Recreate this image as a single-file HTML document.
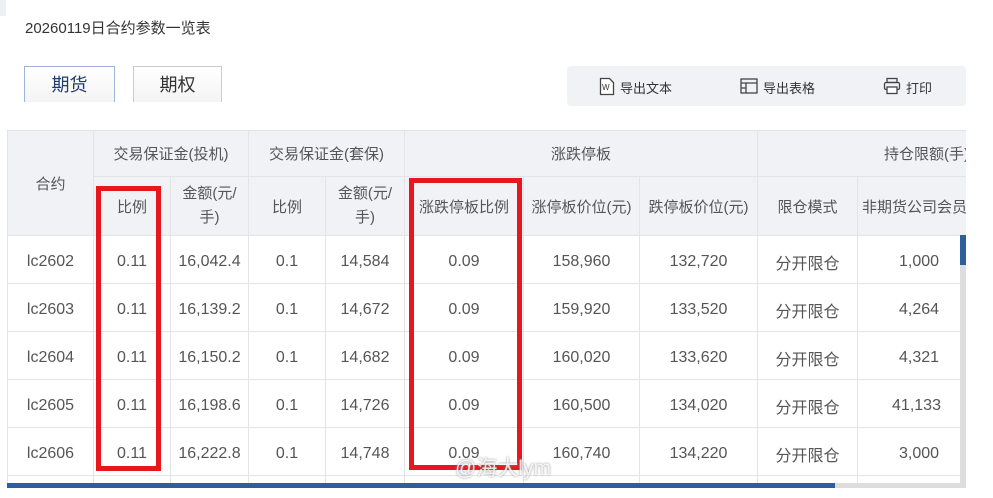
<!DOCTYPE html>
<html><head><meta charset="utf-8"><style>
*{margin:0;padding:0;box-sizing:border-box}
html,body{width:993px;height:498px;overflow:hidden}
body{background:#fff;position:relative;font-family:"Liberation Sans","Noto Sans CJK SC",sans-serif;color:#555}
.a{position:absolute}
.title{left:25px;top:17px;font-size:15px;color:#333}
.tab{top:66px;height:36px;border:1px solid #ccc;border-bottom:none;font-size:18px;text-align:center;line-height:36px;color:#333;background:linear-gradient(#fff,#f4f4f4)}
.tool{left:567px;top:66px;width:399px;height:40px;background:#f0f2f6;border-radius:4px;font-size:13px;color:#333}
.tool span{position:absolute;top:12px}
table{position:absolute;left:7px;top:130px;border-collapse:collapse;table-layout:fixed;width:1000px}
td{border:1px solid #e3e4e8;text-align:center;font-size:15px;color:#555;white-space:nowrap;overflow:hidden;padding:0}
.h td{background:#f1f2f6}
.d td{height:48px;font-size:16px;padding-top:5px}
.wrap{position:absolute;left:0;top:0;width:966px;height:483px;overflow:hidden}
.red{position:absolute;border:5px solid #e8171f}
</style></head><body>
<div class="a" style="left:0;top:0;width:6px;height:16px;background:#eef0f4"></div>
<div class="a title">20260119日合约参数一览表</div>
<div class="a tab" style="left:24px;width:91px;border-color:#9fb4d6;color:#1f3d73">期货</div>
<div class="a tab" style="left:133px;width:89px">期权</div>
<div class="a tool">
<svg class="a" style="left:32px;top:11px" width="16" height="19" viewBox="0 0 16 19"><path d="M1.5 1.5h9l4 4v12h-13z" fill="#fff" stroke="#444" stroke-width="1.3"/><text x="3" y="13" font-size="8" font-family="Liberation Sans" fill="#333">W</text></svg>
<span style="left:53px">导出文本</span>
<svg class="a" style="left:173px;top:11px" width="18" height="18" viewBox="0 0 18 18"><rect x="1" y="2" width="16" height="14" fill="none" stroke="#444" stroke-width="1.3"/><path d="M1 6h16M6 6v10M1 11h5" stroke="#444" stroke-width="1.3"/></svg>
<span style="left:196px">导出表格</span>
<svg class="a" style="left:316px;top:11px" width="18" height="18" viewBox="0 0 18 18"><rect x="4" y="1.5" width="10" height="4" fill="none" stroke="#444" stroke-width="1.3"/><rect x="1.5" y="5.5" width="15" height="7" rx="1.5" fill="none" stroke="#444" stroke-width="1.3"/><rect x="4" y="10" width="10" height="6.5" fill="#fff" stroke="#444" stroke-width="1.3"/></svg>
<span style="left:339px">打印</span>
</div>
<div class="wrap">
<table>
<colgroup><col style="width:86px"><col style="width:77px"><col style="width:78px"><col style="width:77px"><col style="width:79px"><col style="width:119px"><col style="width:116px"><col style="width:118px"><col style="width:100px"><col style="width:150px"></colgroup>
<tr class="h" style="height:46px"><td rowspan="2">合约</td><td colspan="2">交易保证金(投机)</td><td colspan="2">交易保证金(套保)</td><td colspan="3">涨跌停板</td><td colspan="2" style="text-align:left;padding-left:126px">持仓限额(手)</td></tr>
<tr class="h" style="height:59px"><td>比例</td><td style="white-space:normal;line-height:24px">金额(元/<br>手)</td><td>比例</td><td style="white-space:normal;line-height:24px">金额(元/<br>手)</td><td>涨跌停板比例</td><td>涨停板价位(元)</td><td>跌停板价位(元)</td><td>限仓模式</td><td style="text-align:left;padding-left:4px">非期货公司会员</td></tr>
<tr class="d"><td>lc2602</td><td>0.11</td><td>16,042.4</td><td>0.1</td><td>14,584</td><td>0.09</td><td>158,960</td><td>132,720</td><td>分开限仓</td><td style="text-align:left;padding-left:41px">1,000</td></tr>
<tr class="d"><td>lc2603</td><td>0.11</td><td>16,139.2</td><td>0.1</td><td>14,672</td><td>0.09</td><td>159,920</td><td>133,520</td><td>分开限仓</td><td style="text-align:left;padding-left:41px">4,264</td></tr>
<tr class="d"><td>lc2604</td><td>0.11</td><td>16,150.2</td><td>0.1</td><td>14,682</td><td>0.09</td><td>160,020</td><td>133,620</td><td>分开限仓</td><td style="text-align:left;padding-left:41px">4,321</td></tr>
<tr class="d"><td>lc2605</td><td>0.11</td><td>16,198.6</td><td>0.1</td><td>14,726</td><td>0.09</td><td>160,500</td><td>134,020</td><td>分开限仓</td><td style="text-align:left;padding-left:34px">41,133</td></tr>
<tr class="d"><td>lc2606</td><td>0.11</td><td>16,222.8</td><td>0.1</td><td>14,748</td><td>0.09</td><td>160,740</td><td>134,220</td><td>分开限仓</td><td style="text-align:left;padding-left:41px">3,000</td></tr>
<tr class="d"><td></td><td></td><td></td><td></td><td></td><td></td><td></td><td></td><td></td><td></td></tr>
</table>
</div>
<div class="a" style="left:960px;top:235px;width:6px;height:248px;background:#ddd"></div>
<div class="a" style="left:960px;top:235px;width:6px;height:30px;background:#2c5f9e"></div>
<div class="a" style="left:7px;top:483px;width:959px;height:5px;background:#ddd"></div>
<div class="a" style="left:7px;top:483px;width:828px;height:5px;background:#2c5f9e"></div>
<div class="red" style="left:96px;top:186px;width:65px;height:285px"></div>
<div class="red" style="left:409px;top:178px;width:113px;height:292px"></div>
<div class="a" style="left:455px;top:452px;font-size:21px;color:rgba(255,255,255,.85);text-shadow:0 0 2px #888">@海大lym</div>
</body></html>
